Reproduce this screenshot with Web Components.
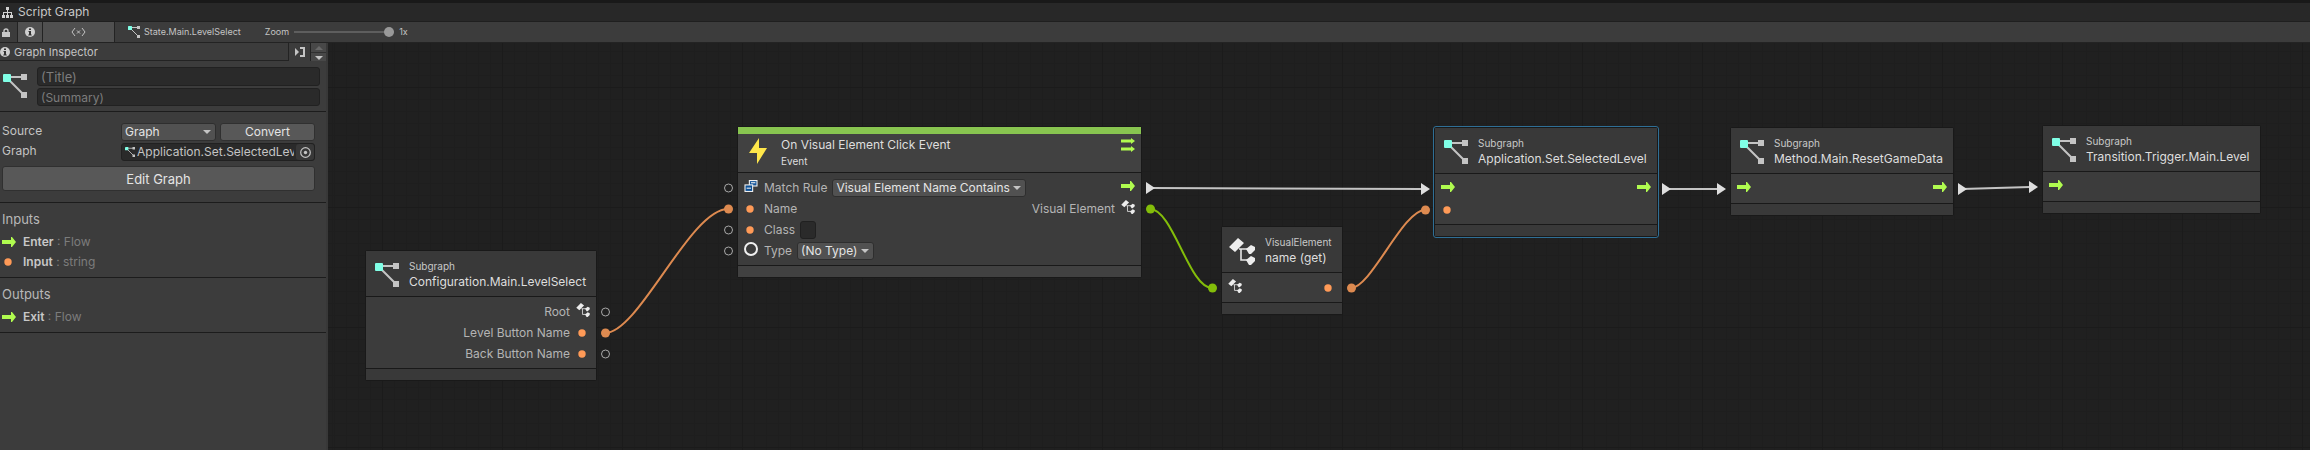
<!DOCTYPE html>
<html lang="en">
<head>
<meta charset="utf-8">
<title>Script Graph</title>
<style>
html, body { height: 100%; margin: 0; }
body { font: 12px/16px Inter, "Liberation Sans", sans-serif; color: #c4c4c4; background: #191919; }
</style>
</head>
<body>
<script-graph-window></script-graph-window>
<script>
const SHAPES = {
  graph: ['0 0 24 24', '<path d="M5 3H20M5 5L21 21" stroke="#c4c4c4" stroke-width="2" fill="none"/><path d="M18 0h6v6h-6zM18 18h6v6h-6z" fill="#c4c4c4"/><rect y="0" width="8" height="8" rx="1" fill="#80ffe6"/>'],
  flow: ['0 0 14 10', '<path d="M0 3H9V0H10L14 5L10 10H9V7H0Z" fill="#b0fb4f"/>'],
  flows: ['0 0 14 14', '<path d="M0 1.500H10V0L14 3L10 6V4.500H0ZM0 9.500H10V8L14 11L10 14V12.500H0Z" fill="#b0fb4f"/>'],
  value: ['0 0 14 14', '<circle cx="6" cy="7" r="3.7" fill="#ff9a57"/>'],
  type: ['0 0 14 14', '<circle cx="7" cy="7" r="6" fill="none" stroke="#f0f0f0" stroke-width="2"/>'],
  element: ['0 0 26 27', '<path d="M10 11H20M12 11V22H20" fill="none" stroke="#e6e6e6" stroke-width="1.6"/><path d="M0 9L9 0L15 5L6 14ZM17 11L22 7L26 9V12L22 16H20ZM17 22L22 18L26 20V23L22 27H20Z" fill="#ededed"/>'],
  enumeration: ['0 0 12 11', '<path d="M4 0h8v6H4z" fill="#eee"/><path d="M5 1h6v4H5z" fill="#15559a"/><path d="M6 2h4v1H6z" fill="#eee"/><path d="M0 4h8v7H0z" fill="#eee"/><path d="M1 5h6v5H1z" fill="#0b4f94"/><path d="M2 7h4v1H2z" fill="#eee"/>'],
  bolt: ['0 0 18 26', '<path d="M10 0L0 15H8V26L18 10H10Z" fill="#ffe74a"/>'],
  tree: ['0 0 11 11', '<path d="M4 0h3v3H6v2h4v3h1v3H8V8h1V6H6v2h1v3H4V8h1V6H2v2h1v3H0V8h1V5h4V3H4z" fill="#d2d2d2"/>'],
  lock: ['0 0 8 9', '<path d="M2 4V3a2 2 0 0 1 4 0v1" fill="none" stroke="#c8c8c8" stroke-width="1.4"/><path d="M0 4h8v5H0z" fill="#c8c8c8"/>'],
  info: ['0 0 10 10', '<circle cx="5" cy="5" r="5" fill="#d0d0d0"/><path d="M4 1.5h2v1.5H4zM3.5 4H6v3.5h.7v1H3.3v-1H4V5h-.5z" fill="#333"/>'],
  vars: ['0 0 15 8', '<path d="M4 0L1 4L4 8M11 0L14 4L11 8M6 2.500L9 5.500M9 2.500L6 5.500" fill="none" stroke="#c4c4c4"/>'],
  dock: ['0 0 10 10', '<path d="M0 1L4 5L0 9ZM5 0h5v10H5V8h3V2H5z" fill="#c4c4c4"/>'],
  up: ['0 0 8 4', '<path d="M0 4L4 0L8 4Z" fill="#686868"/>'],
  down: ['0 0 8 4', '<path d="M0 0H8L4 4Z" fill="#c4c4c4"/>'],
  picker: ['0 0 11 11', '<circle cx="5.500" cy="5.500" r="4.800" fill="none" stroke="#c4c4c4" stroke-width="1.200"/><circle cx="5.500" cy="5.500" r="1.700" fill="#c4c4c4"/>']
};

const define = (name, template, setup) => customElements.define(name, class extends HTMLElement {
  connectedCallback() {
    if (this.shadowRoot) return;
    const root = this.attachShadow({ mode: 'open' });
    root.innerHTML = template;
    if (setup) setup(this, root);
  }
});

const makeIcon = name => {
  const icon = document.createElement('graph-icon');
  icon.className = 'icon';
  icon.setAttribute('name', name);
  return icon;
};

define('graph-icon', '<style>:host{display:block;flex:none}svg{display:block;width:100%;height:100%;overflow:visible}</style>', (host, root) => {
  const [box, body] = SHAPES[host.getAttribute('name')];
  root.innerHTML += `<svg viewBox="${box}" aria-hidden="true">${body}</svg>`;
});

/* Labelled drop-down: a native select with a flat arrow over its right edge.
   With the "cells" attribute, label and box are separate cells of the parent's grid. */
define('drop-down', `<style>
:host{display:block}
label{display:flex;align-items:center;gap:5px}
:host([cells]),:host([cells]) label{display:contents}
.box{display:grid;align-items:center;color:#e4e4e4}
select,graph-icon{grid-area:1/1}
select{appearance:none;font:inherit;color:inherit;width:100%;height:18px;box-sizing:border-box;padding:0 15px 0 3px;background:#515151;border:1px solid #2e2e2e;border-radius:3px;line-height:16px}
graph-icon{width:8px;height:4px;justify-self:end;margin-right:5px;pointer-events:none}
</style><label><span><slot></slot></span><div class="box"><select><option></option></select><graph-icon name="down"></graph-icon></div></label>`, (host, root) => {
  root.querySelector('option').textContent = host.getAttribute('value');
});

/* Row of a port: icon, label, optional field */
define('graph-port', `<style>
:host{display:flex;align-items:center;height:21px;gap:6px;color:#b4b4b4;white-space:nowrap}
:host([side=out]){flex-direction:row-reverse}
.icon{width:14px;height:14px;margin-bottom:4px}
.icon[name=value]{margin-bottom:0}
.icon[name=flow]{height:10px}
.icon[name=enumeration]{height:12px}
</style><slot></slot>`, (host, root) => {
  root.querySelector('slot').before(makeIcon(host.getAttribute('icon')));
});

define('graph-node', `<style>
:host{display:block;position:absolute;box-sizing:border-box;border:1px solid #191919;border-radius:2px;background:#3c3c3c}
:host([selected]){outline:1px solid #2f6f96}
header{display:flex;height:38px;padding:7px 9px 0 9px;background:#393939;border-bottom:1px solid #191919}
:host([event]) header{border-top:7px solid #88c550;padding:3px 6px 0 10px;background:#414141;height:35px}
:host([event]) footer{background:#414141}
.icon{width:24px;height:24px;margin:5px 10px 0 0}
.titles{display:flex;flex-direction:column;color:#dedede;flex:1;white-space:nowrap}
small{font-size:10px;line-height:16px;color:#c8c8c8}
:host([event]) .titles{flex-direction:column-reverse;justify-content:flex-end}
:host([event]) .icon{width:18px;height:26px;margin:1px 14px 0 1px}
:host([icon=element]) .icon{width:26px;height:27px;margin:4px 10px 0 -2px}
:host([event]) small{color:#dedede}
main{display:flex;justify-content:space-between;padding:4px 6px}
footer{height:11px;background:#393939;border-top:1px solid #191919}
</style>
<header><div class="titles"><small></small><span></span></div><slot name="badge"></slot></header>
<main><slot></slot></main><footer></footer>`, (host, root) => {
  root.querySelector('.titles').before(makeIcon(host.getAttribute('icon')));
  root.querySelector('small').textContent = host.getAttribute('kind');
  root.querySelector('span').textContent = host.getAttribute('label');
});

define('graph-canvas', `<style>
:host{display:block;position:relative;overflow:hidden;min-width:0;background:
repeating-linear-gradient(90deg,#1b1b1b 0 1px,transparent 1px 120px) 54px 0,
repeating-linear-gradient(#1b1b1b 0 1px,transparent 1px 120px) 0 44px,
repeating-linear-gradient(90deg,#1e1e1e 0 1px,transparent 1px 12px) 6px 0,
repeating-linear-gradient(#1e1e1e 0 1px,transparent 1px 12px) 0 8px,#202020}
svg.wires{position:absolute;left:0;top:0;width:100%;height:100%;overflow:visible}
.col{display:flex;flex-direction:column}
input{width:16px;height:18px;box-sizing:border-box;background:#2a2a2a;border:1px solid #202020;border-radius:3px;padding:0;color:#ddd;font:inherit}
label{display:flex;align-items:center;gap:5px}
.badge{width:14px;height:14px;margin-top:1px}
#config{left:37px;top:207px;width:232px}
#click{left:409px;top:83px;width:405px}
#name{left:893px;top:183px;width:122px}
#app{left:1106px;top:84px;width:224px}
#method{left:1402px;top:84px;width:224px}
#transition{left:1714px;top:82px;width:219px}
</style>
<svg class="wires" aria-hidden="true">
<g fill="none" stroke-width="2">
<path d="M277 290C311 290 362 166 400 166" stroke="#dd8a50"/>
<path d="M822 166C845 166 861 245 884 245" stroke="#83bd0a"/>
<path d="M1023 245C1043 245 1075 167 1097 167" stroke="#dd8a50"/>
<path d="M822 145L1094 146M1340 146H1390M1634 146L1702 144" stroke="#c4c4c4"/>
</g>
<g fill="#dedede"><path d="M818 139v12l9-6zM1093 140v12l9-6zM1334 140v12l9-6zM1389 140v12l9-6zM1630 140v12l9-6zM1701 138v12l9-6z"/></g>
<g fill="#dd8a50"><circle cx="277.500" cy="290" r="4.500"/><circle cx="400.500" cy="166" r="4.500"/><circle cx="1023.500" cy="245" r="4.500"/><circle cx="1097.500" cy="167" r="4.500"/></g>
<g fill="#83bd0a"><circle cx="822.500" cy="166" r="4.500"/><circle cx="884.500" cy="245" r="4.500"/></g>
<g fill="none" stroke="#a8a8a8"><circle cx="277.500" cy="269" r="4"/><circle cx="277.500" cy="311" r="4"/><circle cx="400.500" cy="145" r="4"/><circle cx="400.500" cy="187" r="4"/><circle cx="400.500" cy="208" r="4"/></g>
</svg>
<graph-node id="config" icon="graph" kind="Subgraph" label="Configuration.Main.LevelSelect"><div></div><div class="col">
<graph-port side="out" icon="element">Root</graph-port><graph-port side="out" icon="value">Level Button Name</graph-port><graph-port side="out" icon="value">Back Button Name</graph-port></div></graph-node>
<graph-node id="click" event icon="bolt" kind="Event" label="On Visual Element Click Event"><graph-icon slot="badge" class="badge" name="flows"></graph-icon>
<div class="col"><graph-port icon="enumeration"><drop-down value="Visual Element Name Contains">Match Rule</drop-down></graph-port>
<graph-port icon="value">Name</graph-port><graph-port icon="value"><label>Class <input type="text"></label></graph-port>
<graph-port icon="type"><drop-down value="(No Type)">Type</drop-down></graph-port></div>
<div class="col"><graph-port side="out" icon="flow"></graph-port><graph-port side="out" icon="element">Visual Element</graph-port></div></graph-node>
<graph-node id="name" icon="element" kind="VisualElement" label="name (get)"><graph-port icon="element"></graph-port><graph-port side="out" icon="value"></graph-port></graph-node>
<graph-node id="app" selected icon="graph" kind="Subgraph" label="Application.Set.SelectedLevel"><div class="col"><graph-port icon="flow"></graph-port><graph-port icon="value"></graph-port></div><graph-port side="out" icon="flow"></graph-port></graph-node>
<graph-node id="method" icon="graph" kind="Subgraph" label="Method.Main.ResetGameData"><graph-port icon="flow"></graph-port><graph-port side="out" icon="flow"></graph-port></graph-node>
<graph-node id="transition" icon="graph" kind="Subgraph" label="Transition.Trigger.Main.Level"><graph-port icon="flow"></graph-port></graph-node>`);

define('inspector-port', `<style>
:host{display:flex;align-items:center;height:20px;gap:7px;color:#7c7c7c}
b{font-weight:600;color:#c8c8c8}
.icon{width:14px;height:14px}
.icon[name=flow]{height:10px}
</style><span><b><slot></slot></b></span>`, (host, root) => {
  const text = root.querySelector('span');
  text.append(' : ' + host.getAttribute('type'));
  text.before(makeIcon(host.getAttribute('icon')));
});

define('graph-inspector', `<style>
:host{display:block;background:#3c3c3c;border-right:2px solid #383838;box-sizing:border-box}
.bar{display:flex;height:18px;box-sizing:border-box;border-bottom:1px solid #232323;line-height:16px}
h2{flex:1;display:flex;align-items:center;gap:4px;margin:0;font-size:11px;font-weight:400}
h2 graph-icon{width:10px;height:10px}
button{font:inherit;color:#e4e4e4;background:#585858;border:1px solid #303030;border-radius:3px;padding:0;height:18px}
.bar button{background:#3c3c3c;border:0;border-left:1px solid #232323;border-radius:0;width:22px;height:18px;display:grid;place-items:center}
.bar button graph-icon{width:10px;height:10px}
.bar .step{width:16px;background:linear-gradient(#484848 9px,#303030 9px 10px,#484848 10px);align-content:space-between;padding:3px 0 1px}
.bar .step graph-icon{width:8px;height:4px}
section{border-bottom:1px solid #1c1c1c}
.head{display:flex;gap:10px;padding:6px 6px 5px 3px}
.head graph-icon{width:24px;height:24px;margin-top:7px}
.fields{flex:1;display:flex;flex-direction:column;gap:2px}
input{font:inherit;height:18px;box-sizing:border-box;background:#2a2a2a;border:1px solid #212121;border-radius:3px;padding:0 3px;color:#ddd}
.title{height:19px;font-size:13px}
input::placeholder{color:#7c7c7c;opacity:1}
.source{display:grid;grid-template-columns:115px 95px 95px;gap:2px 4px;padding:11px 2px 11px}
.object{grid-column:2/4;display:flex;align-items:center;height:18px;box-sizing:border-box;background:#2a2a2a;border:1px solid #212121;border-radius:3px;padding-left:3px;gap:2px;color:#c4c4c4}
.object>graph-icon{width:10px;height:10px}
.object input{flex:1;min-width:0;height:16px;border:0;background:none;padding:0;color:inherit}
.object button{width:18px;height:16px;border:0;background:#383838;display:grid;place-items:center}
.object button graph-icon{width:11px;height:11px}
.edit{grid-column:1/4;height:25px;font-size:13px;margin-top:3px}
h3{margin:0;font-size:13px;font-weight:400;color:#b8b8b8;padding-bottom:5px}
.ports{padding:8px 2px 5px}
</style>
<div class="bar"><h2><graph-icon name="info"></graph-icon>Graph Inspector</h2><button aria-label="Dock"><graph-icon name="dock"></graph-icon></button><button class="step" aria-label="Move"><graph-icon name="up"></graph-icon><graph-icon name="down"></graph-icon></button></div>
<section class="head"><graph-icon name="graph"></graph-icon><div class="fields"><input class="title" aria-label="Title" placeholder="(Title)"><input aria-label="Summary" placeholder="(Summary)"></div></section>
<section class="source"><drop-down cells value="Graph">Source</drop-down><button>Convert</button>
<label for="graph">Graph</label><div class="object"><graph-icon name="graph"></graph-icon><input id="graph" value="Application.Set.SelectedLevel"><button aria-label="Pick graph"><graph-icon name="picker"></graph-icon></button></div>
<button class="edit">Edit Graph</button></section>
<section class="ports"><h3>Inputs</h3><inspector-port icon="flow" type="Flow">Enter</inspector-port><inspector-port icon="value" type="string">Input</inspector-port></section>
<section class="ports"><h3>Outputs</h3><inspector-port icon="flow" type="Flow">Exit</inspector-port></section>`);

define('graph-toolbar', `<style>
:host{display:flex;align-items:stretch;height:20px;background:#3c3c3c;border-bottom:1px solid #232323;font-size:9px;line-height:20px}
button{font:inherit;border:0;border-right:1px solid #232323;background:#3c3c3c;padding:0;display:grid;place-items:center}
.lock{width:18px;padding-right:6px}
.lock graph-icon{width:8px;height:9px}
.info{width:25px;background:#505050}
.info graph-icon{width:10px;height:10px}
.vars{width:72px;background:#505050}
.vars graph-icon{width:15px;height:8px}
a{display:flex;gap:4px;align-items:center;margin-left:13px;color:inherit;text-decoration:none}
a graph-icon{width:12px;height:12px}
label{display:flex;align-items:center;gap:5px;margin-left:24px}
input{appearance:none;margin:0;width:100px;height:10px;background:linear-gradient(#5e5e5e,#5e5e5e) center/100% 2px no-repeat}
input::-webkit-slider-thumb{appearance:none;width:10px;height:10px;border-radius:50%;background:#999}
</style><button class="lock" aria-label="Lock"><graph-icon name="lock"></graph-icon></button><button class="info" aria-label="Inspector"><graph-icon name="info"></graph-icon></button><button class="vars" aria-label="Variables"><graph-icon name="vars"></graph-icon></button>
<a href="#"><graph-icon name="graph"></graph-icon>State.Main.LevelSelect</a><label>Zoom <input type="range" min="0" max="1" value="1" step="any">1x</label>`);

define('script-graph-window', `<style>
:host{display:flex;flex-direction:column;min-height:100vh;box-sizing:border-box;border-top:3px solid #191919}
.tab{display:flex;align-items:center;gap:5px;height:18px;padding-left:2px;background:#282828;border-bottom:1px solid #1f1f1f;color:#c8c8c8}
.tab graph-icon{width:11px;height:11px}
.body{flex:1;display:grid;grid-template-columns:328px 1fr}
</style><div class="tab"><graph-icon name="tree"></graph-icon><span>Script Graph</span></div><graph-toolbar></graph-toolbar><div class="body"><graph-inspector></graph-inspector><graph-canvas></graph-canvas></div>`);
</script>
</body>
</html>
